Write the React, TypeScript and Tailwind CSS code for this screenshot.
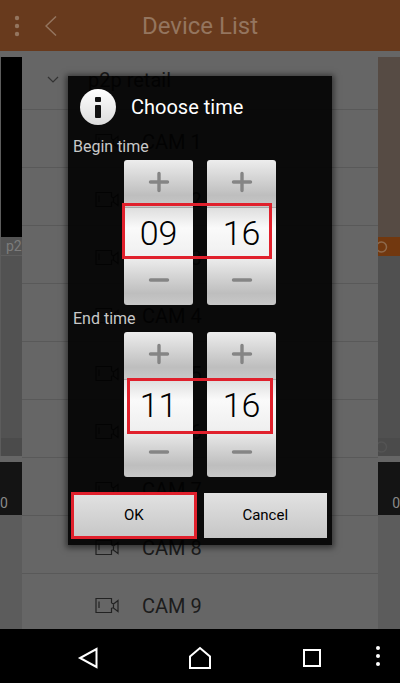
import type {ReactNode} from 'react';

type PickerColumn = {
	unit: string;
	value: string;
};

type TimeFieldProps = {
	label: string;
	columns: PickerColumn[];
	highlightClassName: string;
};

const cameras = ['CAM 1', 'CAM 2', 'CAM 3', 'CAM 4', 'CAM 5', 'CAM 6', 'CAM 7', 'CAM 8', 'CAM 9'];

const CameraIcon = () => (
	<svg width="24" height="18" viewBox="0 0 24 18" fill="none" stroke="#222" strokeWidth="1.2" aria-hidden="true">
		<path d="M16.500 6V1.500H1v14h15.500V11M4 4.500v6.500M16.500 6l2 1 4.500-3.500v11L18.500 11l-2 0M18.500 7v4" />
	</svg>
);

const StepButton = ({label, children}: {label: string; children: ReactNode}) => (
	<button
		type="button"
		aria-label={label}
		className="flex w-full flex-1 items-center justify-center bg-linear-to-b from-[#ededed] via-[#bebebe] via-75% to-[#c8c8c8] pb-1"
	>
		<svg width="22" height="22" viewBox="0 0 22 22" fill="none" stroke="#858585" strokeWidth="3.400" strokeLinecap="round" aria-hidden="true">
			{children}
		</svg>
	</button>
);

const Picker = ({name, column}: {name: string; column: PickerColumn}) => (
	<div className="flex h-[145px] w-[69px] flex-col overflow-hidden rounded-[3px]">
		<StepButton label={`Increase ${column.unit}`}>
			<path d="M2.500 11h17M11 2.500v17" />
		</StepButton>
		<input
			type="text"
			aria-label={`${name} ${column.unit}`}
			defaultValue={column.value}
			className="h-[51px] w-full border-t border-[#a8a8a8] bg-linear-to-b from-[#dedede] via-[#fafafa] via-40% to-[#efefef] pt-px text-center text-[34px] font-light text-black outline-none"
		/>
		<StepButton label={`Decrease ${column.unit}`}>
			<path d="M2.500 11h17" />
		</StepButton>
	</div>
);

const TimeField = ({label, columns, highlightClassName}: TimeFieldProps) => (
	<div role="group" aria-label={label} className="flex flex-col gap-1">
		<p className="pl-[5px] text-base leading-[18px] text-[#c8c8c8]">{label}</p>
		<div className="relative mx-auto flex gap-[14px]">
			{columns.map((column) => (
				<Picker key={column.unit} name={label} column={column} />
			))}
			<div className={`pointer-events-none absolute border-[3px] border-[#e0202c] ${highlightClassName}`} />
		</div>
	</div>
);

const TimeDialog = () => (
	<div
		role="dialog"
		aria-label="Choose time"
		className="w-full bg-black/90 pb-[7px] shadow-[0_1px_6px_2px_rgba(0,0,0,0.5)]"
	>
		<div className="flex h-[62px] items-center gap-[15px] pl-3">
			<svg width="36" height="36" viewBox="0 0 36 36" aria-hidden="true">
				<defs>
					<linearGradient id="info" x1="0" y1="0" x2="0" y2="1">
						<stop offset="0" stopColor="#fff" />
						<stop offset="1" stopColor="#dcdcdc" />
					</linearGradient>
				</defs>
				<circle cx="18" cy="18" r="18" fill="url(#info)" />
				<rect x="15" y="8" width="6" height="5" rx="1" fill="#111" />
				<rect x="15" y="16" width="6" height="13" rx="1" fill="#111" />
			</svg>
			<h2 className="text-xl text-white">Choose time</h2>
		</div>
		<div className="flex flex-col gap-[5px]">
			<TimeField
				label="Begin time"
				columns={[{unit: 'hour', value: '09'}, {unit: 'minute', value: '16'}]}
				highlightClassName="-left-[2px] right-1 top-[43px] h-[56px]"
			/>
			<TimeField
				label="End time"
				columns={[{unit: 'hour', value: '11'}, {unit: 'minute', value: '16'}]}
				highlightClassName="left-[3px] right-[3px] top-[46px] h-[56px]"
			/>
		</div>
		<div className="mt-4 flex gap-2 pl-1 pr-[5px] text-[15px] text-black">
			<button
				type="button"
				className="h-[45px] flex-1 bg-linear-to-b from-[#e2e2e2] to-[#c6c6c6] outline-3 -outline-offset-2 outline-[#e0202c]"
			>
				OK
			</button>
			<button type="button" className="h-[45px] flex-1 bg-linear-to-b from-[#e2e2e2] to-[#c6c6c6]">
				Cancel
			</button>
		</div>
	</div>
);

const DeviceList = () => (
	<ul className="min-w-0 flex-1 overflow-hidden bg-[#666] text-xl text-[#1c1c1c]">
		<li className="flex h-[59px] items-center gap-[29px] border-b border-[#595959] pl-[25px]">
			<svg width="12" height="8" viewBox="0 0 12 8" fill="none" stroke="#333" strokeWidth="1.2" aria-hidden="true">
				<path d="M1 1l5 5 5-5" />
			</svg>
			p2p retail
		</li>
		{cameras.map((camera) => (
			<li
				key={camera}
				className="flex h-[58px] items-center gap-[23px] border-b border-[#595959] pl-[73px] pt-1.5 last:border-b-0"
			>
				<CameraIcon />
				{camera}
			</li>
		))}
	</ul>
);

const LeftStrip = () => (
	<div className="flex w-[22px] flex-col overflow-hidden bg-[#5c5c5c] text-[#7c7c7c]">
		<div className="h-[6px] bg-[#666]" />
		<div className="ml-px h-[180px] bg-black" />
		<div className="ml-px h-[19px] border-b border-[#5e5e5e] bg-[#535353] pl-[5px] text-sm leading-[18px]">p2</div>
		<div className="ml-px h-[182px] bg-[#525252]" />
		<div className="ml-px h-[18px] bg-[#4b4b4b]" />
		<div className="h-[6px] bg-[#666]" />
		<div className="flex h-[53px] items-end bg-[#141414] pb-[2px] text-sm text-[#8a8a8a]">0</div>
	</div>
);

const RightStrip = () => (
	<div className="flex w-[22px] flex-col overflow-hidden bg-[#5c5c5c]">
		<div className="h-[6px] bg-[#666]" />
		<div className="h-[180px] bg-[#564b44]" />
		<div className="flex h-[19px] items-center bg-[#72380f]">
			<svg width="10" height="12" viewBox="0 0 10 12" fill="none" stroke="#8d6a4e" strokeWidth="1.500" aria-hidden="true">
				<circle cx="3.500" cy="6" r="5" />
			</svg>
		</div>
		<div className="h-[182px] bg-[#505050]" />
		<div className="flex h-[18px] items-center bg-[#4b4b4b]">
			<svg width="10" height="12" viewBox="0 0 10 12" fill="none" stroke="#545454" strokeWidth="1.500" aria-hidden="true">
				<circle cx="3.500" cy="6" r="5" />
			</svg>
		</div>
		<div className="h-[6px] bg-[#666]" />
		<div className="flex h-[53px] items-end justify-end bg-[#141414] pb-[2px] text-sm text-[#8a8a8a]">0</div>
	</div>
);

const NavBar = () => (
	<nav className="grid h-[54px] grid-cols-[1fr_1fr_1fr_32px] items-center bg-black pl-8 pt-1">
		<button type="button" aria-label="Back" className="flex justify-center">
			<svg width="22" height="24" viewBox="0 0 22 24" fill="none" stroke="#fff" strokeWidth="2">
				<path d="M19.500 3v18L3 12z" />
			</svg>
		</button>
		<button type="button" aria-label="Home" className="flex justify-center">
			<svg width="24" height="24" viewBox="0 0 24 24" fill="none" stroke="#fff" strokeWidth="2">
				<path d="M2 10.500L12 2l10 8.500V22H2z" />
			</svg>
		</button>
		<button type="button" aria-label="Recent apps" className="flex justify-center">
			<svg width="20" height="20" viewBox="0 0 20 20" fill="none" stroke="#fff" strokeWidth="2">
				<path d="M2 2h16v16H2z" />
			</svg>
		</button>
		<button type="button" aria-label="Menu" className="flex pb-1 pl-[7px]">
			<svg width="6" height="22" viewBox="0 0 6 22" fill="#fff">
				<circle cx="3" cy="3" r="2" />
				<circle cx="3" cy="11" r="2" />
				<circle cx="3" cy="19" r="2" />
			</svg>
		</button>
	</nav>
);

export default function App() {
	return (
		<div className="relative flex h-screen flex-col overflow-hidden bg-black font-['Roboto',sans-serif]">
			<header className="grid h-[51px] shrink-0 grid-cols-[60px_1fr_60px] items-center bg-[#683a1d] text-[#94755f]">
				<div className="flex items-center gap-[25px] pl-[14px]">
					<button type="button" aria-label="More">
						<svg width="6" height="22" viewBox="0 0 6 22" fill="currentColor">
							<circle cx="3" cy="3" r="2.200" />
							<circle cx="3" cy="11" r="2.200" />
							<circle cx="3" cy="19" r="2.200" />
						</svg>
					</button>
					<button type="button" aria-label="Go back">
						<svg width="12" height="20" viewBox="0 0 12 20" fill="none" stroke="currentColor" strokeWidth="1.500">
							<path d="M11 .5L1 10l10 9.500" />
						</svg>
					</button>
				</div>
				<h1 className="text-center text-2xl">Device List</h1>
			</header>
			<main className="flex min-h-0 flex-1">
				<LeftStrip />
				<DeviceList />
				<RightStrip />
			</main>
			<NavBar />
			<div className="absolute inset-0 flex items-center px-17 pb-[62px]">
				<TimeDialog />
			</div>
		</div>
	);
}
